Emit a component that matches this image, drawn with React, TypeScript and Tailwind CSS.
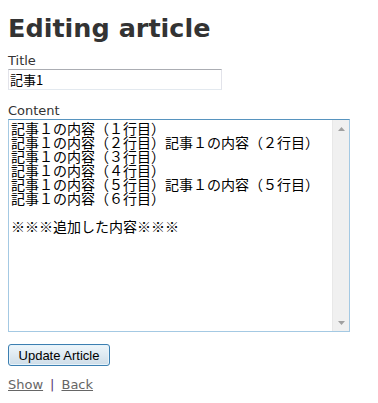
import React from 'react';

const lines = [
  '記事１の内容（１行目）',
  '記事１の内容（２行目）記事１の内容（２行目）',
  '記事１の内容（３行目）',
  '記事１の内容（４行目）',
  '記事１の内容（５行目）記事１の内容（５行目）',
  '記事１の内容（６行目）',
  '',
  '※※※追加した内容※※※',
];

const ScrollArrow = ({ up }: { up?: boolean }) => (
  <div className="h-[17px] flex items-center justify-center">
    <svg width="7" height="4" viewBox="0 0 7 4">
      {up ? <path d="M0 4 L3.5 0 L7 4 Z" fill="#a0a0a0" /> : <path d="M0 0 L7 0 L3.5 4 Z" fill="#a0a0a0" />}
    </svg>
  </div>
);

export default function App() {
  return (
    <div className="min-h-[403px] bg-white px-2 text-[#333] text-[13px] leading-[18px] font-['DejaVu_Sans',Verdana,sans-serif]">
      <h1 className="pt-[10px] text-[25.5px] leading-[36px] font-bold">Editing article</h1>

      {/* title */}
      <div className="mt-[7px]">
        <label className="block leading-[16px]">Title</label>
        <input
          defaultValue="記事1"
          className="block w-[214px] h-[21px] px-[1px] border border-[#e2e3ea] border-t-[#abadb3] border-b-[#e3e9ef] text-[13px] text-black outline-none font-['Noto_Sans_CJK_JP',sans-serif]"
        />
      </div>

      {/* content */}
      <div className="mt-[13px]">
        <label className="block leading-[16px]">Content</label>
        <div className="flex w-[342px] h-[213px] border border-[#a4c9e3] border-t-[#5794bf]">
          <div className="flex-1 px-[2px] pt-[1px] text-black text-[14px] leading-[14px] whitespace-pre font-['Noto_Sans_CJK_JP',monospace]">
            {lines.map((l, i) => (
              <div key={i} className="h-[14px]">{l}</div>
            ))}
          </div>
          <div className="w-[17px] flex flex-col justify-between bg-[#f0f0f0] border-l border-[#e8e8e8]">
            <ScrollArrow up />
            <ScrollArrow />
          </div>
        </div>
      </div>

      <button className="mt-[12px] w-[102px] h-[22px] rounded-[3px] border border-[#3c7fb1] bg-gradient-to-b from-[#eef6fb] to-[#cfdde8] text-[13px] text-black leading-none font-['Liberation_Sans',Tahoma,sans-serif] shadow-[inset_0_0_0_1px_#e6f3fb]">
        Update Article
      </button>

      <div className="mt-[10px]">
        <a href="#" className="text-[#666] underline">Show</a>
        <span className="mx-[7px] text-[#5a3a73]">|</span>
        <a href="#" className="text-[#666] underline">Back</a>
      </div>
    </div>
  );
}
